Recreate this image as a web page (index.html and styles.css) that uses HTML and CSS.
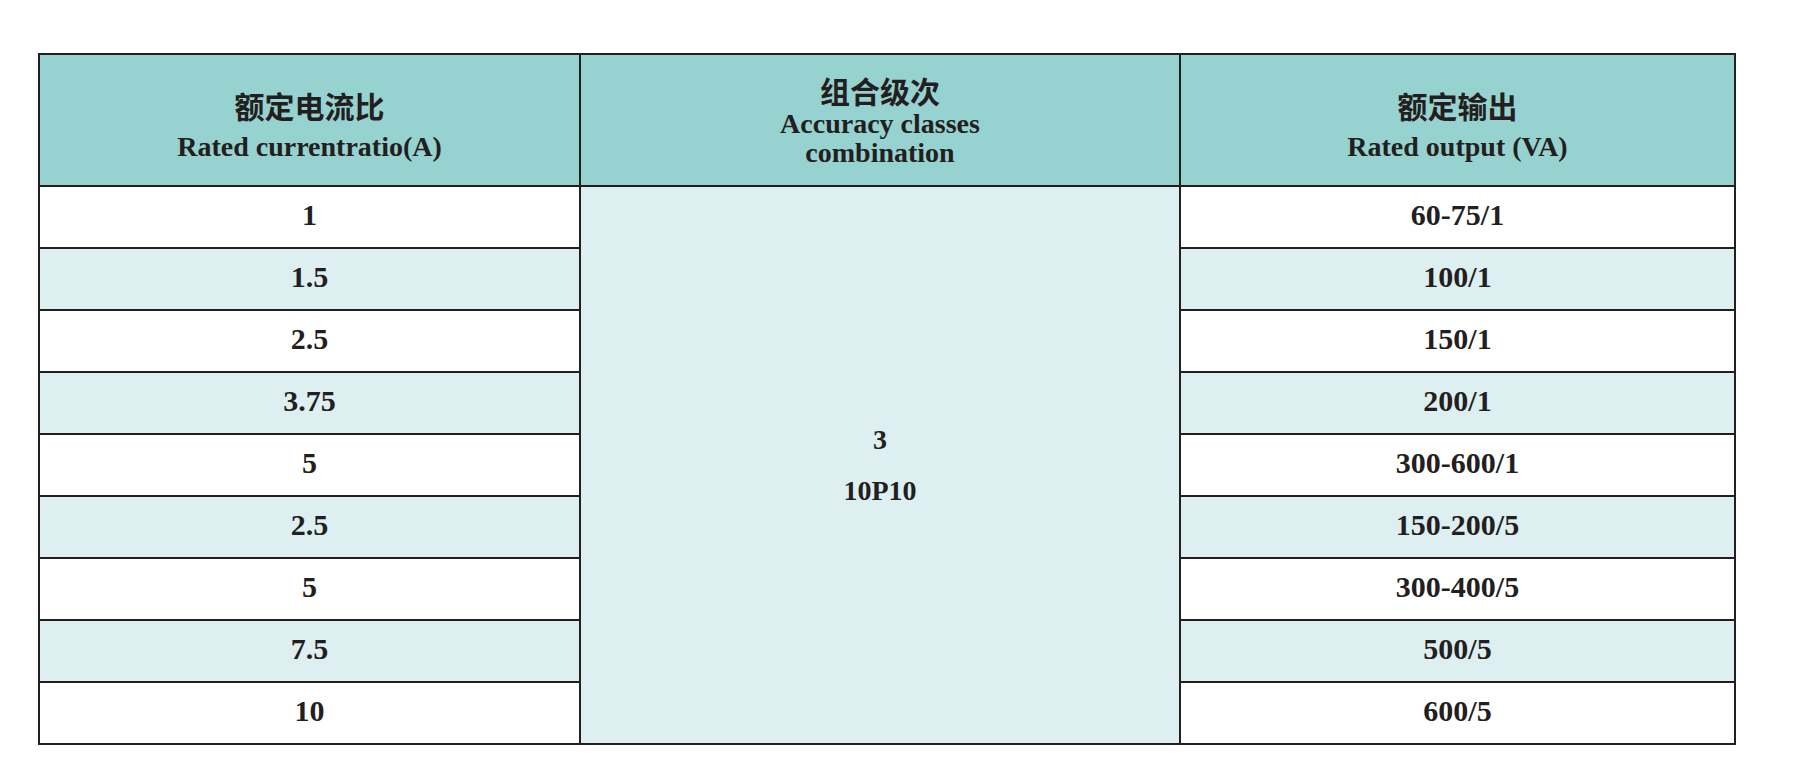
FILE: index.html
```html
<!DOCTYPE html>
<html lang="zh">
<head>
<meta charset="utf-8">
<title>额定电流比</title>
<link rel="stylesheet" href="styles.css">
</head>
<body>
<div class="sheet">
  <div class="head head-side">
    <div class="zh">额定电流比</div>
    <div class="en">Rated currentratio(A)</div>
  </div>
  <div class="head head-mid">
    <div class="zh">组合级次</div>
    <div class="en">Accuracy classes</div>
    <div class="en">combination</div>
  </div>
  <div class="head head-side">
    <div class="zh">额定输出</div>
    <div class="en">Rated output (VA)</div>
  </div>

  <div class="mid">
    <div class="mid-line">3</div>
    <div class="mid-line">10P10</div>
  </div>

  <div class="cell">1</div><div class="cell">60-75/1</div>
  <div class="cell alt">1.5</div><div class="cell alt">100/1</div>
  <div class="cell">2.5</div><div class="cell">150/1</div>
  <div class="cell alt">3.75</div><div class="cell alt">200/1</div>
  <div class="cell">5</div><div class="cell">300-600/1</div>
  <div class="cell alt">2.5</div><div class="cell alt">150-200/5</div>
  <div class="cell">5</div><div class="cell">300-400/5</div>
  <div class="cell alt">7.5</div><div class="cell alt">500/5</div>
  <div class="cell">10</div><div class="cell">600/5</div>
</div>
</body>
</html>
```
FILE: styles.css
```css
html, body {
  margin: 0;
  padding: 0;
  background: #ffffff;
}

body {
  font-family: "Liberation Serif", "Times New Roman", serif;
  color: #231f20;
}

.sheet {
  display: grid;
  grid-template-columns: 539px 598px 553px;
  grid-template-rows: 130px repeat(9, 60px);
  gap: 2px;
  padding: 2px;
  background: #231f20;
  width: max-content;
  margin: 53px 0 0 38px;
}

.head {
  background: #96d2cf;
  display: flex;
  flex-direction: column;
  align-items: center;
  justify-content: center;
  font-weight: bold;
}

.head-side {
  padding-top: 9px;
}

.head .zh {
  font-family: "Noto Sans CJK SC", "Noto Sans", sans-serif;
  font-size: 30px;
  line-height: 34px;
  font-weight: 700;
}

.head .en {
  font-family: "Liberation Serif", "Times New Roman", serif;
  font-size: 28px;
  line-height: 29px;
  font-weight: 700;
}

.head-side .en {
  margin-top: 10px;
}

.head-mid .zh {
  margin-bottom: 2px;
}

.mid {
  grid-column: 2;
  grid-row: 2 / span 9;
  background: #ddeff1;
  display: flex;
  flex-direction: column;
  align-items: center;
  justify-content: center;
  gap: 21px;
  font-size: 28px;
  font-weight: bold;
}

.mid-line {
  line-height: 30px;
}

.cell {
  background: #ffffff;
  display: flex;
  align-items: center;
  justify-content: center;
  font-size: 30px;
  font-weight: bold;
  padding-bottom: 4px;
}

.cell.alt {
  background: #ddeff1;
}
```
